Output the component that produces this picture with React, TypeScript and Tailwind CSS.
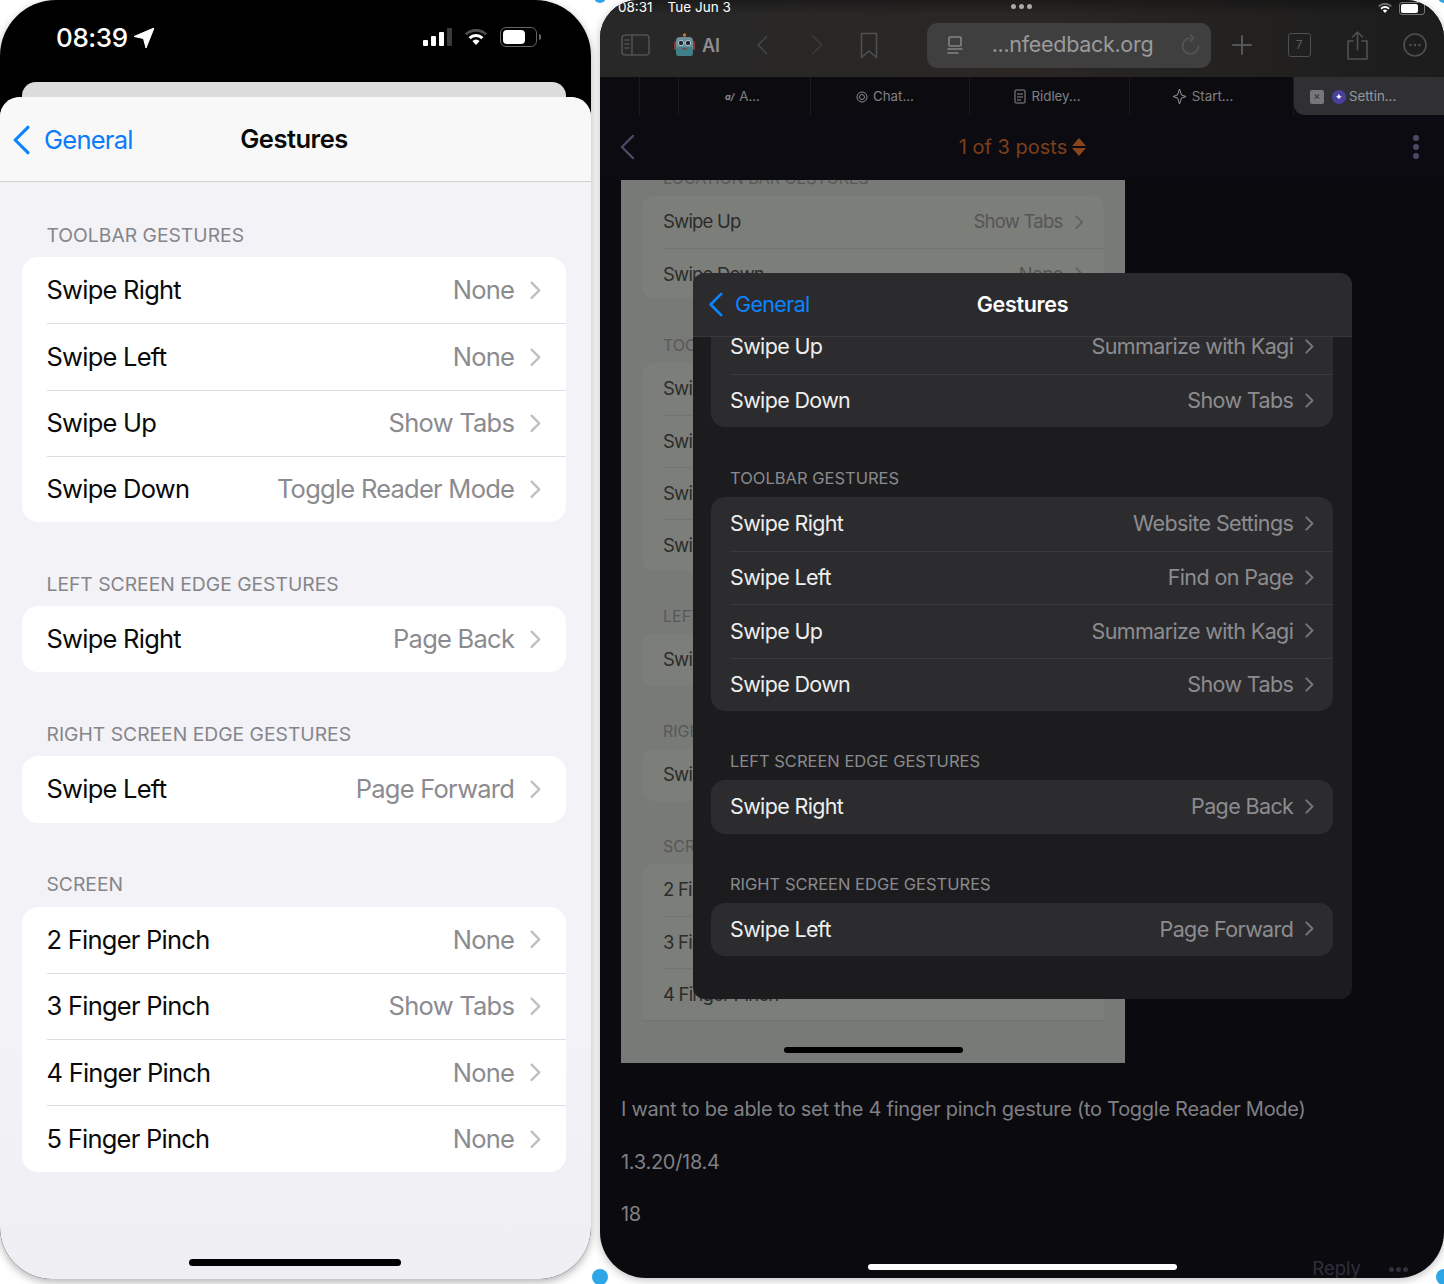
import { ReactNode } from "react";

type Row = { label: string; value: string };
type Section = { title: string; rows: Row[] };

const phoneSections: Section[] = [
  {
    title: "TOOLBAR GESTURES",
    rows: [
      { label: "Swipe Right", value: "None" },
      { label: "Swipe Left", value: "None" },
      { label: "Swipe Up", value: "Show Tabs" },
      { label: "Swipe Down", value: "Toggle Reader Mode" },
    ],
  },
  { title: "LEFT SCREEN EDGE GESTURES", rows: [{ label: "Swipe Right", value: "Page Back" }] },
  { title: "RIGHT SCREEN EDGE GESTURES", rows: [{ label: "Swipe Left", value: "Page Forward" }] },
  {
    title: "SCREEN",
    rows: [
      { label: "2 Finger Pinch", value: "None" },
      { label: "3 Finger Pinch", value: "Show Tabs" },
      { label: "4 Finger Pinch", value: "None" },
      { label: "5 Finger Pinch", value: "None" },
    ],
  },
];

const modalSections: Section[] = [
  {
    title: "TOOLBAR GESTURES",
    rows: [
      { label: "Swipe Right", value: "Website Settings" },
      { label: "Swipe Left", value: "Find on Page" },
      { label: "Swipe Up", value: "Summarize with Kagi" },
      { label: "Swipe Down", value: "Show Tabs" },
    ],
  },
  { title: "LEFT SCREEN EDGE GESTURES", rows: [{ label: "Swipe Right", value: "Page Back" }] },
  { title: "RIGHT SCREEN EDGE GESTURES", rows: [{ label: "Swipe Left", value: "Page Forward" }] },
];

function Chevron({ className, size = 14, sw = 2.2 }: { className: string; size?: number; sw?: number }) {
  return (
    <svg className={className} width={size * 0.7} height={size * 1.2} viewBox="0 0 10 17" fill="none">
      <path d="M1.5 1.5 8.5 8.5 1.5 15.5" stroke="currentColor" strokeWidth={sw} strokeLinecap="round" strokeLinejoin="round" />
    </svg>
  );
}

function BackChevron({ className, w, h, sw = 3 }: { className: string; w: number; h: number; sw?: number }) {
  return (
    <svg className={className} width={w} height={h} viewBox="0 0 17 28" fill="none">
      <path d="M15 2 3 14 15 26" stroke="currentColor" strokeWidth={sw} strokeLinecap="round" strokeLinejoin="round" />
    </svg>
  );
}

function Wifi({ w, h, outer = 1 }: { w: number; h: number; outer?: number }) {
  return (
    <svg width={w} height={h} viewBox="0 0 22 16" fill="#fff">
      <path d="M11 16 7.4 12.1a5 5 0 0 1 7.2 0L11 16Z" />
      <path d="M5.6 10.2 3.6 8a10.6 10.6 0 0 1 14.8 0l-2 2.2a7.8 7.8 0 0 0-10.8 0Z" />
      <path d="M1.9 6.3 0 4.2a16 16 0 0 1 22 0l-1.9 2.1a13.2 13.2 0 0 0-18.200 0Z" opacity={outer} />
    </svg>
  );
}

function StatusBar() {
  return (
    <div className="flex h-[82px] shrink-0 items-start justify-between pl-[56px] pr-[50px] pt-[22px]">
      <div className="flex items-center gap-[6px]">
        <span className="text-[26px] font-medium leading-[32px] tracking-[-0.4px] text-white">08:39</span>
        <svg width="20" height="20" viewBox="0 0 20 20" fill="#fff">
          <path d="M20 0 12 20 9.500 10.500 0 8.500Z" stroke="#fff" strokeLinejoin="round" />
        </svg>
      </div>
      <div className="flex items-center gap-[13px] pt-[5px]">
        <div className="flex items-end gap-[3px]">
          <span className="h-[6px] w-[5px] rounded-[1px] bg-white" />
          <span className="h-[10px] w-[5px] rounded-[1px] bg-white" />
          <span className="h-[14px] w-[5px] rounded-[1px] bg-white" />
          <span className="h-[18px] w-[5px] rounded-[1px] bg-[#3a3a3a]" />
        </div>
        <Wifi w={22} h={16} outer={0.3} />
        <div className="flex items-center gap-[2px]">
          <div className="flex h-[20px] w-[37px] items-center rounded-[6px] border-[1.500px] border-[#666] p-[2px]">
            <span className="h-full w-[22px] rounded-[4px] bg-white" />
          </div>
          <span className="h-[6px] w-[2px] rounded-r-full bg-[#666]" />
        </div>
      </div>
    </div>
  );
}

function PhoneCard({ section }: { section: Section }) {
  return (
    <div>
      <div className="flex h-[42px] items-center pb-[1px] pl-[46.500px] text-[19.300px] leading-none text-[#85858a]">{section.title}</div>
      <div className="ml-[22px] mr-[25px] rounded-[16px] bg-white pl-[24.500px]">
        {section.rows.map((row, i) => (
          <div
            key={row.label}
            className={`flex h-[66.250px] items-center justify-between pr-[25px] ${i > 0 ? "border-t border-[#dedee1]" : ""}`}
          >
            <span className="text-[25.500px] tracking-[-0.75px] text-[#0a0a0a]">{row.label}</span>
            <div className="flex items-center gap-[16px]">
              <span className="text-[25.500px] tracking-[-0.75px] text-[#8b8b8f]">{row.value}</span>
              <Chevron className="text-[#c0c0c4]" size={15.500} />
            </div>
          </div>
        ))}
      </div>
    </div>
  );
}

function LeftPhone() {
  return (
    <div className="relative flex h-[1279px] w-[591px] shrink-0 flex-col overflow-hidden rounded-t-[56px] rounded-b-[52px] bg-black shadow-[0_3px_8px_rgba(0,0,0,0.3)]">
      <StatusBar />
      <div className="ml-[22px] mr-[25px] h-[15px] shrink-0 rounded-t-[14px] bg-[#dcdcdc]" />
      <div className="flex flex-1 flex-col rounded-t-[20px] bg-gradient-to-b from-[#f2f2f7] from-80% to-[#eeeef3]">
        <div className="relative flex h-[85px] shrink-0 items-center justify-center rounded-t-[20px] border-b border-[#cfcfd2] bg-[#f8f8f8] pr-[3px] pt-[1px]">
          <div className="absolute left-[12px] top-[28px] flex items-center gap-[14px]">
            <BackChevron className="text-[#0a84ff]" w={18} h={30} />
            <span className="text-[25.500px] leading-[30px] tracking-[-0.75px] text-[#0a7cf5]">General</span>
          </div>
          <span className="text-[25.500px] font-semibold tracking-[-0.5px] text-[#0a0a0a]">Gestures</span>
        </div>
        <div className="flex flex-col gap-[42px] pt-[33px]">
          {phoneSections.map((s) => (
            <PhoneCard key={s.title} section={s} />
          ))}
        </div>
      </div>
      <div className="absolute bottom-[13px] left-[189px] h-[7px] w-[212px] rounded-full bg-black" />
    </div>
  );
}

function ToolIcon({ children, w, h, vb }: { children: ReactNode; w: number; h: number; vb: string }) {
  return (
    <svg width={w} height={h} viewBox={vb} fill="none" stroke="#505051" strokeWidth="1.600" strokeLinecap="round" strokeLinejoin="round">
      {children}
    </svg>
  );
}

function Toolbar() {
  return (
    <div className="flex h-[77px] shrink-0 flex-col bg-gradient-to-r from-[#282828] via-[#2a2725] to-[#1c1c1c]">
      <div className="relative flex h-[15px] items-center justify-between bg-gradient-to-b from-black/30 to-transparent pl-[18px] pr-[19px] pt-[1px] text-[13.500px] text-white">
        <div className="flex gap-[15px] leading-none">
          <span>08:31</span>
          <span>Tue Jun 3</span>
        </div>
        <div className="absolute left-[411px] top-[4px] flex gap-[3px]">
          <span className="size-[5px] rounded-full bg-[#aaa]" />
          <span className="size-[5px] rounded-full bg-[#aaa]" />
          <span className="size-[5px] rounded-full bg-[#aaa]" />
        </div>
        <div className="flex items-center gap-[7px]">
          <Wifi w={14} h={10} outer={0.4} />
          <div className="flex h-[13px] w-[26px] items-center rounded-[3px] border border-[#777] p-px">
            <span className="h-full w-[17px] rounded-[2px] bg-white" />
          </div>
        </div>
      </div>
      <div className="relative flex flex-1 items-center pb-[2px] pl-[21px]">
        <ToolIcon w={29} h={22} vb="0 0 29 22">
          <rect x="1" y="1" width="27" height="20" rx="3" />
          <path d="M11 1v20M4 6h4M4 10h4M4 14h4" />
        </ToolIcon>
        <svg className="ml-[24px]" width="21" height="24" viewBox="0 0 21 24">
          <circle cx="10.500" cy="2" r="1.700" fill="#c87432" />
          <rect x="0" y="8" width="3" height="9" rx="1.500" fill="#8c3a35" />
          <rect x="18" y="8" width="3" height="9" rx="1.500" fill="#8c3a35" />
          <rect x="2" y="4" width="17" height="19" rx="4" fill="#6d8d96" />
          <rect x="2" y="14" width="17" height="9" rx="3" fill="#3e7f8a" />
          <circle cx="7" cy="10" r="2.700" fill="#1c2a33" stroke="#a9c4cc" />
          <circle cx="14" cy="10" r="2.700" fill="#1c2a33" stroke="#a9c4cc" />
          <rect x="8.500" y="15" width="4" height="1.500" fill="#8c3a35" />
        </svg>
        <span className="ml-[7px] text-[18px] font-semibold text-[#8f8f90]">AI</span>
        <BackChevron className="ml-[36px] text-[#4a4a4b]" w={12} h={22} sw={1.800} />
        <Chevron className="ml-[43px] text-[#383839]" size={18} sw={1.500} />
        <svg className="ml-[36px]" width="18" height="27" viewBox="0 0 18 27" fill="none" stroke="#4f4f50" strokeWidth="1.600" strokeLinejoin="round">
          <path d="M1.500 1.500h15v24L9 19l-7.500 6.500Z" />
        </svg>
        <div className="ml-[49px] flex h-[45px] w-[284px] items-center rounded-[10px] bg-[#3f3f40] pl-[20px]">
          <ToolIcon w={16} h={19} vb="0 0 16 19">
            <rect x="2" y="1" width="12" height="9" rx="1" stroke="#858586" />
            <path d="M1 13h14M1 17h10" stroke="#858586" />
          </ToolIcon>
          <span className="ml-[29px] text-[21.500px] leading-none tracking-[-0.3px] text-[#9a9a9b]">...nfeedback.org</span>
          <svg className="ml-[28px]" width="19" height="22" viewBox="0 0 19 22" fill="none" stroke="#565657" strokeWidth="1.600" strokeLinecap="round">
            <path d="M9.500 4a8 8 0 1 0 8 8M9.500 1l3 3-3 3" />
          </svg>
        </div>
        <svg className="ml-[21px]" width="20" height="20" viewBox="0 0 20 20" stroke="#565657" strokeWidth="2" strokeLinecap="round">
          <path d="M10 1v18M1 10h18" />
        </svg>
        <div className="ml-[36px] flex h-[24px] w-[23px] items-center justify-center rounded-[3px] border-[1.500px] border-[#505051] text-[12px] text-[#5c5c5d]">7</div>
        <div className="ml-[35px]">
          <ToolIcon w={23} h={29} vb="0 0 23 29">
            <path d="M7 10H2v18h19V10h-5M11.500 19V1M6.500 6l5-5 5 5" />
          </ToolIcon>
        </div>
        <div className="ml-[34px]">
          <ToolIcon w={24} h={24} vb="0 0 24 24">
            <circle cx="12" cy="12" r="11" />
            <path d="M7.500 12h.01M12 12h.01M16.500 12h.01" strokeWidth="2.400" />
          </ToolIcon>
        </div>
      </div>
    </div>
  );
}

function Tab({ w, icon, label, pr }: { w: number; icon: ReactNode; label: string; pr: string }) {
  return (
    <div className={`flex h-full items-center justify-center gap-[5px] border-r border-[#1b1b1f] pt-[1px] text-[13.300px] text-[#808084] ${pr}`} style={{ width: w }}>
      {icon}
      <span>{label}</span>
    </div>
  );
}

function TabStrip() {
  return (
    <div className="flex h-[38px] shrink-0 items-stretch bg-[#0c0c10]">
      <div className="w-[40px] border-r border-[#1b1b1f]" />
      <div className="w-[39px] border-r border-[#1b1b1f]" />
      <Tab w={132} pr="pr-[4px]" label="A..." icon={<span className="text-[9px] font-bold italic text-[#8c8c90]">a/</span>} />
      <Tab
        w={159}
        pr="pr-[10px]"
        label="Chat..."
        icon={
          <svg width="12" height="12" viewBox="0 0 12 12" fill="none" stroke="#8c8c90">
            <circle cx="6" cy="6" r="5" />
            <circle cx="6" cy="6" r="2.500" />
          </svg>
        }
      />
      <Tab
        w={160}
        pr="pr-[4px]"
        label="Ridley..."
        icon={
          <svg width="12" height="15" viewBox="0 0 12 15" fill="none" stroke="#8c8c90">
            <rect x="1" y="1" width="10" height="13" rx="1" />
            <path d="M3 5h6M3 8h6M3 11h4" />
          </svg>
        }
      />
      <Tab
        w={164}
        pr="pr-[18px]"
        label="Start..."
        icon={
          <svg width="15" height="17" viewBox="0 0 15 17" fill="none" stroke="#9a9a9e">
            <path d="M7.500 1 9.500 7 14 8.500 9.500 10 7.500 16 5.500 10 1 8.500 5.500 7Z" />
          </svg>
        }
      />
      <div className="flex flex-1 items-center gap-[8px] rounded-bl-[10px] bg-[#303032] pl-[16px] pt-[1px] text-[13.300px] text-[#98989c]">
        <span className="flex size-[14px] items-center justify-center rounded-[2px] bg-[#77777a] text-[11px] leading-none text-[#303032]">×</span>
        <div className="flex items-center gap-[3px]">
          <span className="flex size-[14px] items-center justify-center rounded-full bg-[#4b3f9e] text-[9px] leading-none text-white">✦</span>
          <span>Settin...</span>
        </div>
      </div>
    </div>
  );
}

function PostHeader() {
  return (
    <div className="relative flex h-[65px] shrink-0 items-center justify-center bg-[#0b0b11] pb-[2px]">
      <BackChevron className="absolute left-[19px] top-[19px] text-[#4b4863]" w={16} h={26} sw={2.500} />
      <div className="flex items-center gap-[5px] pl-[1px]">
        <span className="text-[20px] text-[#7c3f1b]">1 of 3 posts</span>
        <div className="flex flex-col gap-[2px]">
          <span className="h-0 w-0 border-x-[7px] border-b-[8px] border-x-transparent border-b-[#8a451c]" />
          <span className="h-0 w-0 border-x-[7px] border-t-[8px] border-x-transparent border-t-[#8a451c]" />
        </div>
      </div>
      <div className="absolute right-[25px] top-[20px] flex flex-col gap-[3px]">
        <span className="size-[6px] rounded-full bg-[#4b4863]" />
        <span className="size-[6px] rounded-full bg-[#4b4863]" />
        <span className="size-[6px] rounded-full bg-[#4b4863]" />
      </div>
    </div>
  );
}

function ShotRow({ label, value, line }: { label: string; value?: string; line?: boolean }) {
  return (
    <div className={`flex h-[52px] items-center justify-between pr-[21px] ${line ? "border-t border-[#72756f]" : ""}`}>
      <span className="text-[18.500px] tracking-[-0.8px] text-[#2b2c2a]">{label}</span>
      {value && (
        <div className="flex items-center gap-[12px]">
          <span className="text-[18.500px] tracking-[-0.75px] text-[#545653]">{value}</span>
          <Chevron className="text-[#5f615e]" size={12} />
        </div>
      )}
    </div>
  );
}

function ShotCard({ title, rows, open }: { title: string; rows: string[]; open?: boolean }) {
  return (
    <div>
      <div className="flex h-[27px] items-start pl-[42px] text-[16px] leading-[18px] text-[#575956]">{title}</div>
      <div className={`mx-[21px] bg-[#7c7e7a] pl-[21px] ${open ? "rounded-t-[12px] border-b border-[#72756f]" : "rounded-[12px]"}`}>
        {rows.map((r, i) => (
          <ShotRow key={r + i} label={r} line={i > 0} />
        ))}
      </div>
    </div>
  );
}

function Screenshot() {
  return (
    <div className="relative ml-[21px] h-[883px] w-[504px] overflow-hidden bg-[#777a76]">
      <div className="flex flex-col">
        <div className="-mt-[10px] h-[18px] pl-[42px] text-[16px] leading-[16px] text-[#575956]">LOCATION BAR GESTURES</div>
        <div className="mx-[21px] mt-[8px] h-[102px] rounded-[12px] bg-[#7c7e7a] pl-[21px]">
          <ShotRow label="Swipe Up" value="Show Tabs" />
          <ShotRow label="Swipe Down" value="None" line />
        </div>
        <div className="mt-[38px] flex flex-col gap-[36px]">
          <ShotCard title="TOOLBAR GESTURES" rows={["Swipe Right", "Swipe Left", "Swipe Up", "Swipe Down"]} />
          <ShotCard title="LEFT" rows={["Swipe Right"]} />
          <ShotCard title="RIGHT" rows={["Swipe Left"]} />
          <ShotCard title="SCREEN" rows={["2 Finger Pinch", "3 Finger Pinch", "4 Finger Pinch"]} open />
        </div>
      </div>
      <div className="absolute bottom-[10px] left-[163px] h-[6px] w-[179px] rounded-full bg-black" />
    </div>
  );
}

function ModalRows({ rows }: { rows: Row[] }) {
  return (
    <div className="ml-[18px] mr-[19px] rounded-[14px] bg-[#2c2c2e] pl-[19px]">
      {rows.map((row, i) => (
        <div
          key={row.label}
          className={`flex h-[53.500px] items-center justify-between pb-[1px] pr-[19px] ${i > 0 ? "border-t border-[#3a3a3c]" : ""}`}
        >
          <span className="text-[21.500px] tracking-[-0.65px] text-[#eeeeef]">{row.label}</span>
          <div className="flex items-center gap-[12px]">
            <span className="text-[21.500px] tracking-[-0.62px] text-[#8c8c90]">{row.value}</span>
            <Chevron className="text-[#77777b]" size={12.500} />
          </div>
        </div>
      ))}
    </div>
  );
}

function GesturesModal() {
  return (
    <div className="absolute left-[93px] top-[273px] flex h-[726px] w-[659px] flex-col overflow-hidden rounded-[12px] bg-[#1c1c1e]">
      <div className="relative z-10 flex h-[64px] shrink-0 items-center justify-center border-b border-[#38383a] bg-[#2b2b2d]">
        <div className="absolute left-[15px] top-[18px] flex items-center gap-[12px]">
          <BackChevron className="text-[#0a84ff]" w={15} h={25} />
          <span className="text-[21.500px] leading-[26px] tracking-[-0.65px] text-[#0a84ff]">General</span>
        </div>
        <span className="text-[21.500px] font-semibold tracking-[-0.3px] text-white">Gestures</span>
      </div>
      <div className="-mt-[17px] flex flex-col">
        <ModalRows
          rows={[
            { label: "Swipe Up", value: "Summarize with Kagi" },
            { label: "Swipe Down", value: "Show Tabs" },
          ]}
        />
        {modalSections.map((s, i) => (
          <div key={s.title} className={i === 0 ? "mt-[38px]" : "mt-[37px]"}>
            <div className="flex h-[32px] items-start pl-[37px] pt-[1px] text-[16.500px] leading-[24px] text-[#8a8a8e]">{s.title}</div>
            <ModalRows rows={s.rows} />
          </div>
        ))}
      </div>
    </div>
  );
}

function RightPhone() {
  return (
    <div className="relative ml-[9px] flex h-[1278px] w-[844px] shrink-0 flex-col overflow-hidden rounded-t-[38px] rounded-b-[46px] bg-[#0a0a0f] shadow-[0_2px_8px_rgba(0,0,0,0.25)]">
      <Toolbar />
      <TabStrip />
      <PostHeader />
      <Screenshot />
      <div className="ml-[21px] pt-[20px] text-[20px] leading-[52.500px] tracking-[-0.28px] text-[#808084]">
        <p>I want to be able to set the 4 finger pinch gesture (to Toggle Reader Mode)</p>
        <p>1.3.20/18.4</p>
        <p>18</p>
      </div>
      <GesturesModal />
      <div className="absolute bottom-[8px] left-[268px] h-[6px] w-[309px] rounded-full bg-white" />
      <div className="absolute bottom-[-5px] right-[36px] flex items-center gap-[28px]">
        <span className="text-[18.500px] text-[#302f3b]">Reply</span>
        <div className="flex gap-[2px]">
          <span className="size-[5px] rounded-full bg-[#302f3b]" />
          <span className="size-[5px] rounded-full bg-[#302f3b]" />
          <span className="size-[5px] rounded-full bg-[#302f3b]" />
        </div>
      </div>
    </div>
  );
}

export default function App() {
  return (
    <div className="relative flex h-[1284px] w-[1444px] items-start overflow-hidden bg-white font-['Inter',sans-serif]">
      <LeftPhone />
      <RightPhone />
      <span className="absolute left-[592px] top-[1269px] size-[16px] rounded-full bg-[#2ca6e6]" />
      <span className="absolute left-[1436px] top-[1269px] size-[16px] rounded-full bg-[#2ca6e6]" />
      <span className="absolute left-[594px] top-[-9px] size-[12px] rounded-full bg-[#2ca6e6]" />
      <span className="absolute left-[1438px] top-[-9px] size-[12px] rounded-full bg-[#2ca6e6]" />
    </div>
  );
}
